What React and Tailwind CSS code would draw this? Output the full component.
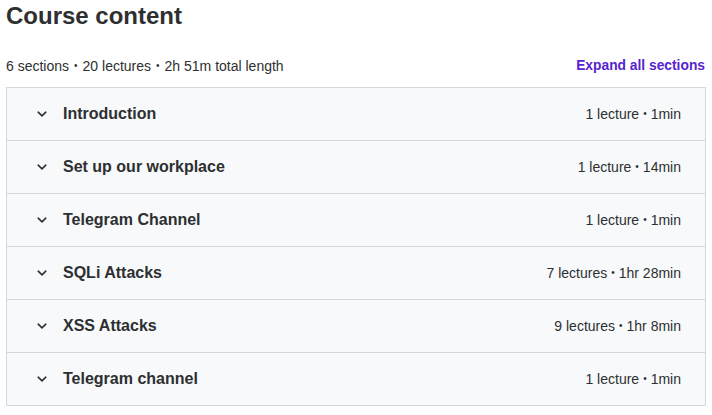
import React from "react";

const sections = [
  { title: "Introduction", meta: "1 lecture • 1min" },
  { title: "Set up our workplace", meta: "1 lecture • 14min" },
  { title: "Telegram Channel", meta: "1 lecture • 1min" },
  { title: "SQLi Attacks", meta: "7 lectures • 1hr 28min" },
  { title: "XSS Attacks", meta: "9 lectures • 1hr 8min" },
  { title: "Telegram channel", meta: "1 lecture • 1min" },
];

function Chevron() {
  return (
    <svg width="10" height="6" viewBox="0 0 10 6" fill="none" stroke="#2d2f31" strokeWidth="1.6" strokeLinecap="round" strokeLinejoin="round">
      <path d="M1.2 1.2L5 4.8l3.8-3.6" />
    </svg>
  );
}

function Dot() {
  return <span className="mx-[5px] text-[10px] leading-none">•</span>;
}

function Meta({ text }) {
  const parts = text.split(" • ");
  return (
    <span className="ml-auto text-[14px] flex items-center">
      {parts[0]}
      <span className="mx-[4px] text-[10px] leading-none">•</span>
      {parts[1]}
    </span>
  );
}

export default function App() {
  return (
    <div className="w-[712px] h-[415px] bg-white text-[#2d2f31] px-[6px]" style={{ fontFamily: "'Liberation Sans', Arial, sans-serif" }}>
      <h2 className="text-[24px] leading-[32px] font-bold">Course content</h2>
      <div className="flex items-center justify-between mt-[24px] h-[20px]">
        <span className="text-[14px] flex items-center">
          6 sections<Dot />20 lectures<Dot />2h 51m total length
        </span>
        <button className="text-[13.8px] font-bold text-[#5624d0] pr-[1px]">Expand all sections</button>
      </div>
      <div className="mt-[11px] border-x border-b border-[#d1d7dc] bg-[#f7f9fa]">
        {sections.map((s, i) => (
          <div key={i} className="flex items-center h-[53px] pl-[30px] pr-[24px] border-t border-[#d1d7dc]">
            <Chevron />
            <span className="ml-[16px] text-[16px] font-bold">{s.title}</span>
            <Meta text={s.meta} />
          </div>
        ))}
      </div>
    </div>
  );
}
